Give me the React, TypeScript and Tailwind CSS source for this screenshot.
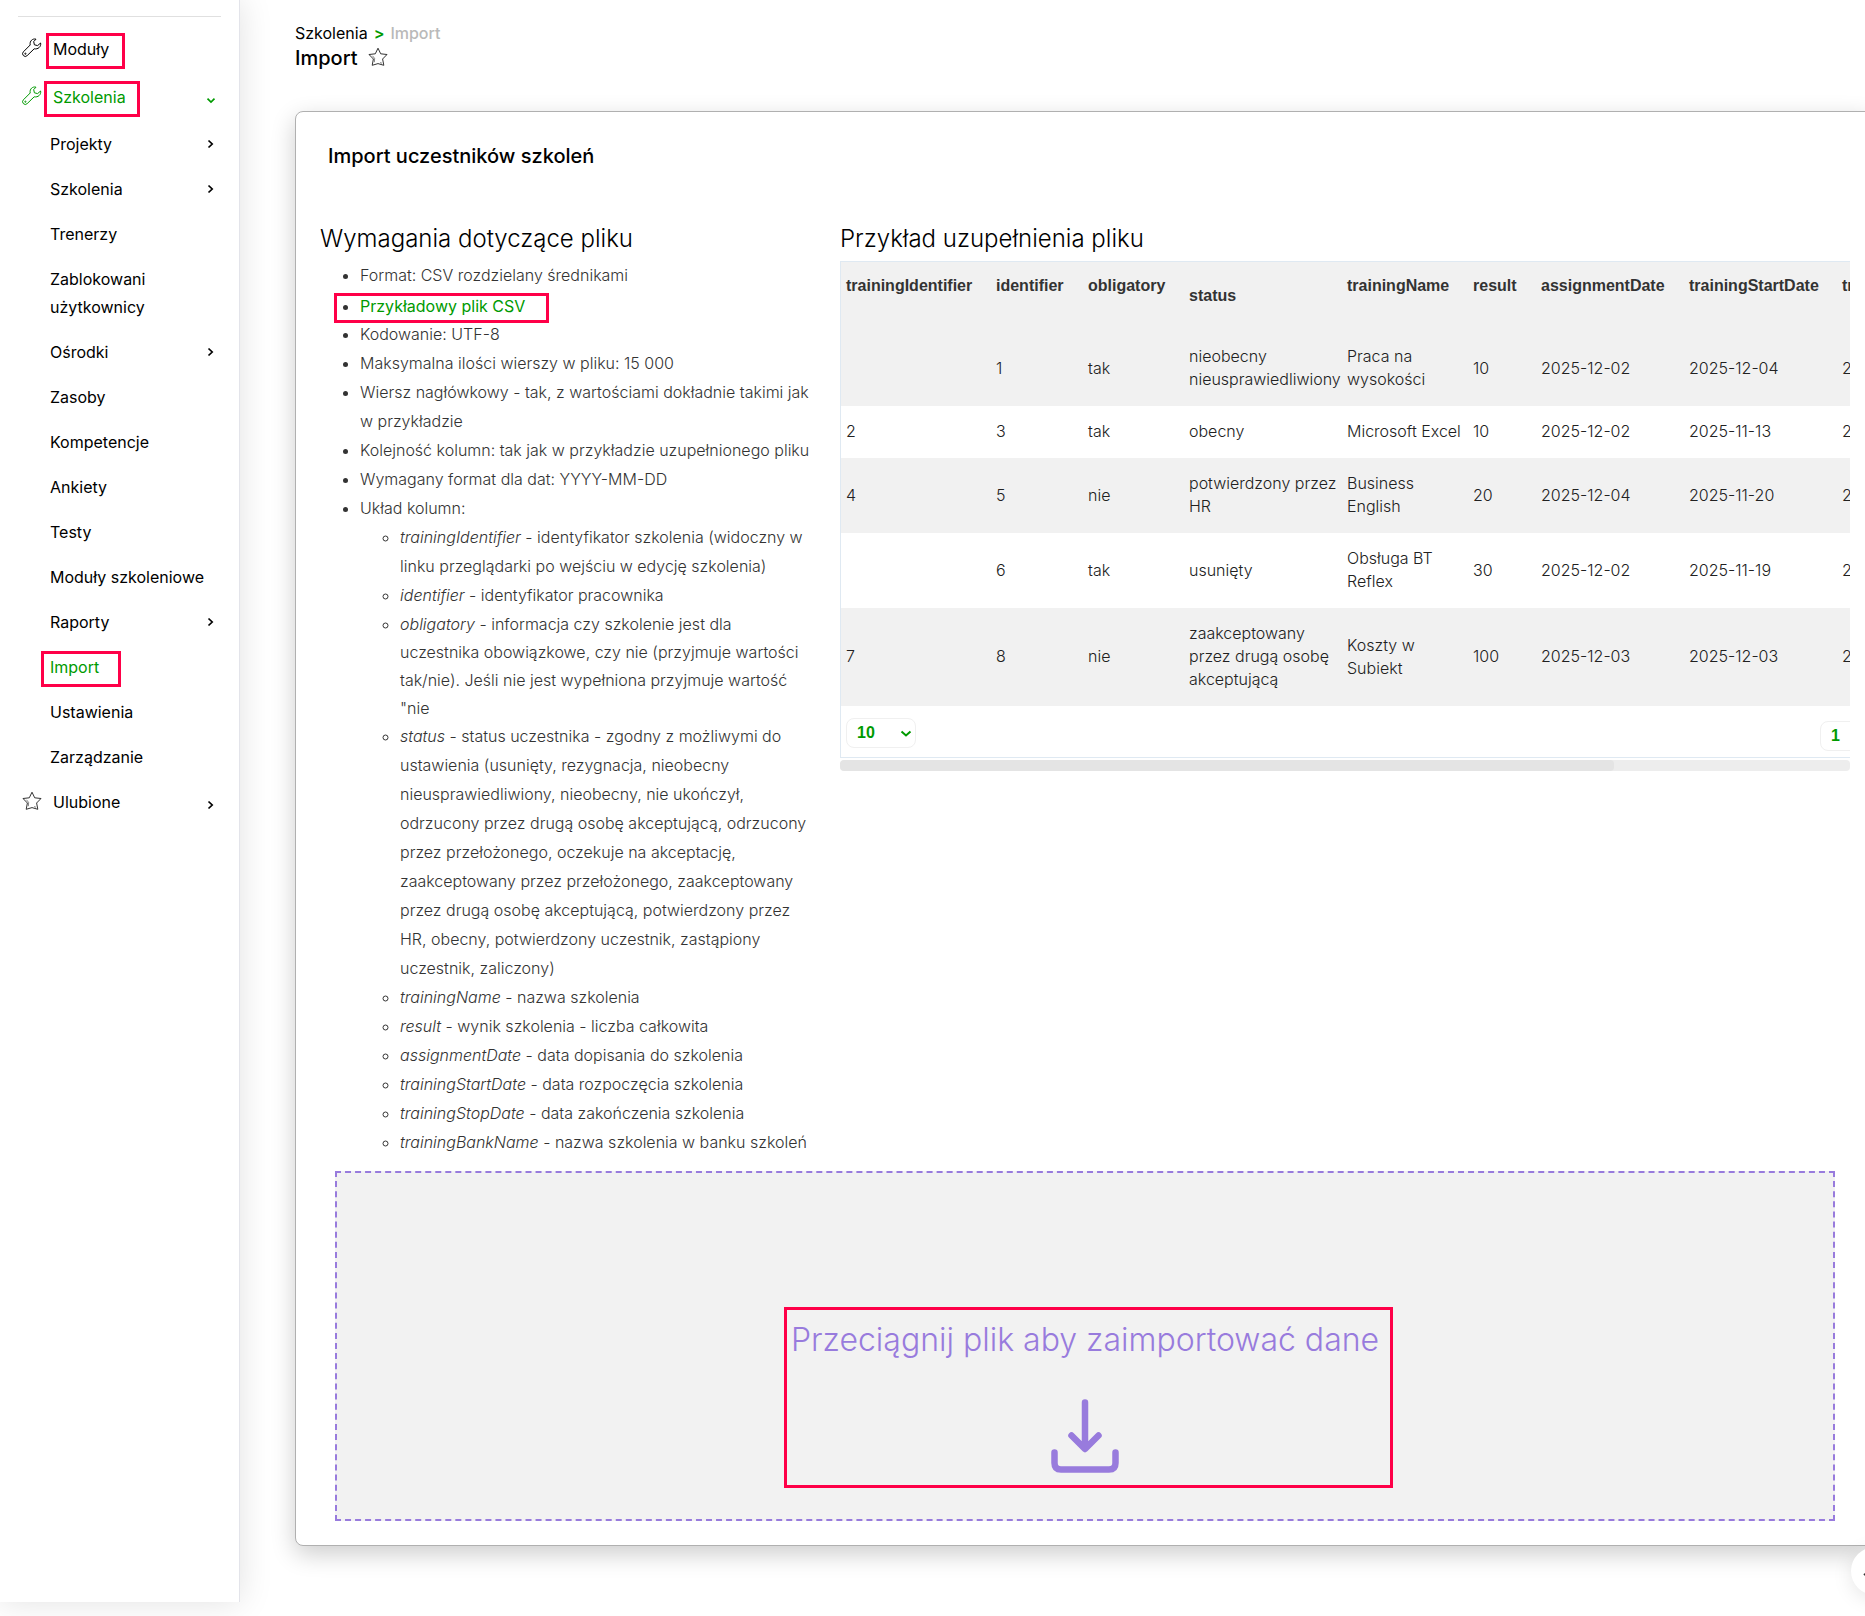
import type { ReactNode } from "react"
import clsx from "clsx"

type SubItem = { label: string, arrow?: boolean, active?: boolean }

const subItems: SubItem[] = [
    { label: "Projekty", arrow: true },
    { label: "Szkolenia", arrow: true },
    { label: "Trenerzy" },
    { label: "Zablokowani użytkownicy" },
    { label: "Ośrodki", arrow: true },
    { label: "Zasoby" },
    { label: "Kompetencje" },
    { label: "Ankiety" },
    { label: "Testy" },
    { label: "Moduły szkoleniowe" },
    { label: "Raporty", arrow: true },
    { label: "Import", active: true },
    { label: "Ustawienia" },
    { label: "Zarządzanie" },
]

const columnsInfo = [
    { name: "trainingIdentifier", text: "identyfikator szkolenia (widoczny w\nlinku przeglądarki po wejściu w edycję szkolenia)" },
    { name: "identifier", text: "identyfikator pracownika" },
    { name: "obligatory", text: "informacja czy szkolenie jest dla\nuczestnika obowiązkowe, czy nie (przyjmuje wartości\ntak/nie). Jeśli nie jest wypełniona przyjmuje wartość\n\"nie", dense: true },
    { name: "status", text: "status uczestnika - zgodny z możliwymi do\nustawienia (usunięty, rezygnacja, nieobecny\nnieusprawiedliwiony, nieobecny, nie ukończył,\nodrzucony przez drugą osobę akceptującą, odrzucony\nprzez przełożonego, oczekuje na akceptację,\nzaakceptowany przez przełożonego, zaakceptowany\nprzez drugą osobę akceptującą, potwierdzony przez\nHR, obecny, potwierdzony uczestnik, zastąpiony\nuczestnik, zaliczony)" },
    { name: "trainingName", text: "nazwa szkolenia" },
    { name: "result", text: "wynik szkolenia - liczba całkowita" },
    { name: "assignmentDate", text: "data dopisania do szkolenia" },
    { name: "trainingStartDate", text: "data rozpoczęcia szkolenia" },
    { name: "trainingStopDate", text: "data zakończenia szkolenia" },
    { name: "trainingBankName", text: "nazwa szkolenia w banku szkoleń" },
]

const headers = [
    { name: "trainingIdentifier", width: "w-[150px]" },
    { name: "identifier", width: "w-[92px]" },
    { name: "obligatory", width: "w-[101px]" },
    { name: "status", width: "w-[158px]" },
    { name: "trainingName", width: "w-[126px]" },
    { name: "result", width: "w-[68px]" },
    { name: "assignmentDate", width: "w-[148px]" },
    { name: "trainingStartDate", width: "w-[153px]" },
    { name: "trainingStopDate", width: "w-[154px]" },
]

const rows = [
    ["", "1", "tak", "nieobecny\nnieusprawiedliwiony", "Praca na\nwysokości", "10", "2025-12-02", "2025-12-04", "2025-12-04"],
    ["2", "3", "tak", "obecny", "Microsoft Excel", "10", "2025-12-02", "2025-11-13", "2025-11-13"],
    ["4", "5", "nie", "potwierdzony przez\nHR", "Business\nEnglish", "20", "2025-12-04", "2025-11-20", "2025-11-20"],
    ["", "6", "tak", "usunięty", "Obsługa BT\nReflex", "30", "2025-12-02", "2025-11-19", "2025-11-19"],
    ["7", "8", "nie", "zaakceptowany\nprzez drugą osobę\nakceptującą", "Koszty w\nSubiekt", "100", "2025-12-03", "2025-12-03", "2025-12-03"],
]

export default function App() {
    return (
        <div className="flex min-h-screen bg-white font-['Inter',sans-serif] text-base text-black">
            <Sidebar />
            <main className="relative flex-1 min-w-0 overflow-hidden pl-[55px] pt-[21px] pb-16">
                <nav aria-label="Okruszki" className="flex gap-1.5 leading-6">
                    <a href="#szkolenia">Szkolenia</a>
                    <span className="font-semibold text-[#009a00]">&gt;</span>
                    <span className="font-medium text-[#b9b9b9]">Import</span>
                </nav>
                <div className="flex gap-2.5 pt-px">
                    <h1 className="text-xl leading-6 font-medium">Import</h1>
                    <button type="button" aria-label="Dodaj do ulubionych">
                        <StarIcon />
                    </button>
                </div>

                <section className="-mr-2 mt-[41px] rounded-lg border border-[#b0b0b0] bg-white pt-[30px] pr-[22px] pb-6 pl-6 shadow-[0_8px_24px_rgba(0,0,0,0.2)]">
                    <h2 className="ml-2 text-xl leading-7 font-medium">Import uczestników szkoleń</h2>
                    <div className="mt-[53px] grid grid-cols-3">
                        <Requirements />
                        <Example />
                    </div>
                    <DropZone />
                </section>

                <button
                    type="button"
                    aria-label="Do góry"
                    className="absolute top-[1547px] -right-[34px] flex size-12 items-center justify-center rounded-full bg-white shadow-[0_4px_20px_rgba(0,0,0,0.1)]">
                    <svg viewBox="0 0 24 12" className="w-6 h-3" fill="none" stroke="#333" strokeWidth="2">
                        <path d="M1 10 12 1l11 9" />
                    </svg>
                </button>
            </main>
        </div>
    )
}

function Sidebar() {
    return (
        <aside className="relative z-10 mb-3.5 w-60 shrink-0 border-r border-[#e3e4ea] bg-white pt-4 shadow-[0_0_32px_rgba(0,0,0,0.12)]">
            <hr className="mr-[18px] ml-[18px] border-[#e0e0e0]" />
            <ul className="pt-2.5 pr-[25px] pl-[22px]">
                <li className="mb-[3px]">
                    <TopItem icon={<WrenchIcon />}>
                        <Marked box="-top-0.5 -left-[7px] h-9 w-[79px]">Moduły</Marked>
                    </TopItem>
                </li>
                <li>
                    <TopItem icon={<WrenchIcon />} arrow="down" active>
                        <Marked box="-top-0.5 -left-[9px] h-9 w-24">Szkolenia</Marked>
                    </TopItem>
                    <ul className="mt-0.5">
                        {subItems.map((item) => (
                            <li key={item.label}>
                                <a
                                    href="#"
                                    className={clsx("flex items-center justify-between pt-2 pb-[9px] pl-7 leading-7", item.active && "text-[#009a00]")}>
                                    {item.active
                                        ? <Marked box="-top-0.5 -left-[9px] h-9 w-20">{item.label}</Marked>
                                        : <span>{wrapLabel(item.label)}</span>}
                                    {item.arrow && <Chevron dir="right" />}
                                </a>
                            </li>
                        ))}
                    </ul>
                </li>
                <li>
                    <TopItem icon={<StarIcon />} arrow="right">Ulubione</TopItem>
                </li>
            </ul>
        </aside>
    )
}

// only the longest label needs two lines
function wrapLabel(label: string) {
    return label.startsWith("Zablokowani") ? <>Zablokowani<br />użytkownicy</> : label
}

function TopItem({ icon, arrow, active, children }: { icon: ReactNode, arrow?: "right" | "down", active?: boolean, children: ReactNode }) {
    return (
        <a href="#" className={clsx("flex items-center pt-2 pb-[9px] leading-7", active && "text-[#009a00]")}>
            <span className="mr-[11px]">{icon}</span>
            <span>{children}</span>
            {arrow && <span className={clsx("mt-1.5 ml-auto", arrow === "down" && "-mr-0.5")}><Chevron dir={arrow} /></span>}
        </a>
    )
}

function Marked({ box, children }: { box: string, children: ReactNode }) {
    return (
        <span className="relative inline-block">
            {children}
            <span className={clsx("pointer-events-none absolute border-3 border-[#ff0048]", box)} />
        </span>
    )
}

function Requirements() {
    return (
        <div>
            <h3 className="mb-1.5 text-2xl leading-8 font-light whitespace-nowrap">Wymagania dotyczące pliku</h3>
            <ul className="list-disc pl-10 leading-[29px] font-light whitespace-pre text-[#333]">
                <li>Format: CSV rozdzielany średnikami</li>
                <li className="pt-0.5 leading-7">
                    <Marked box="top-px -left-[26px] h-[30px] w-[215px]">
                        <a href="#csv" className="font-normal text-[#009a00]">Przykładowy plik CSV</a>
                    </Marked>
                </li>
                <li>Kodowanie: UTF-8</li>
                <li>Maksymalna ilości wierszy w pliku: 15 000</li>
                <li>{"Wiersz nagłówkowy - tak, z wartościami dokładnie takimi jak\nw przykładzie"}</li>
                <li>Kolejność kolumn: tak jak w przykładzie uzupełnionego pliku</li>
                <li>Wymagany format dla dat: YYYY-MM-DD</li>
                <li>
                    Układ kolumn:
                    <ul className="list-[circle] pl-10">
                        {columnsInfo.map((col) => (
                            <li key={col.name} className={clsx(col.dense && "leading-7")}>
                                <em>{col.name}</em> - {col.text}
                            </li>
                        ))}
                    </ul>
                </li>
            </ul>
        </div>
    )
}

function Example() {
    return (
        <div className="col-span-2 min-w-0 pl-2.5">
            <h3 className="mb-1.5 text-2xl leading-8 font-light">Przykład uzupełnienia pliku</h3>
            <div className="overflow-hidden border-y border-l border-[#dfe9f2]">
                <table className="w-[1150px] table-fixed text-left font-light leading-[23px] whitespace-pre">
                    <thead className="bg-[#f1f1f1] font-['Liberation_Sans',sans-serif] text-[#333]">
                        <tr className="h-[69px]">
                            {headers.map(({ name, width }) => (
                                <th
                                    key={name}
                                    className={clsx("px-[5px] font-bold", width, name === "status" ? "pb-0.5 align-middle" : "pt-3 align-top")}>
                                    {name}
                                </th>
                            ))}
                        </tr>
                    </thead>
                    <tbody className="text-[#212121]">
                        {rows.map((row) => (
                            <tr key={row[1]} className="odd:bg-[#f1f1f1]">
                                {row.map((cell, i) => (
                                    <td key={headers[i].name} className="px-[5px] pt-3.5 pb-[15px]">{cell}</td>
                                ))}
                            </tr>
                        ))}
                    </tbody>
                </table>
                <div className="flex justify-between pt-3 pb-1.5 pl-[5px]">
                    <PageSelect label="Liczba wierszy" options={["10", "20", "50"]} />
                    <div className="mt-[3px] -mr-10">
                        <PageSelect label="Strona" options={["1"]} />
                    </div>
                </div>
            </div>
            <div className="mt-0.5 h-[11px] overflow-hidden rounded bg-[#ededed]">
                <div className="h-full w-23/30 rounded bg-[#e4e4e4]" />
            </div>
        </div>
    )
}

function PageSelect({ label, options }: { label: string, options: string[] }) {
    return (
        <div className="relative h-[30px] w-[70px] font-['Liberation_Sans',sans-serif] text-[#009a00]">
            <select
                aria-label={label}
                className="size-full appearance-none rounded-lg border border-[#f0f0f0] bg-white pl-2.5 font-bold">
                {options.map((o) => <option key={o}>{o}</option>)}
            </select>
            <svg viewBox="0 0 12 8" className="pointer-events-none absolute top-3 right-1 h-2 w-3" fill="none" stroke="currentColor" strokeWidth="2">
                <path d="M1.5 1.5 6 5.5l4.5-4" />
            </svg>
        </div>
    )
}

function DropZone() {
    return (
        <label className="mx-[15px] mt-3.5 flex h-[350px] justify-center border-2 border-dashed border-[#987bdd] bg-[#f2f2f2] pt-[146px] text-[#987bdd]">
            <input type="file" accept=".csv" className="sr-only" />
            <div className="relative h-[154px]">
                <p className="pt-px text-[32px] leading-10 font-light">Przeciągnij plik aby zaimportować dane</p>
                <svg viewBox="0 0 68 74" className="mx-auto mt-[39px] w-[68px] h-[74px]" fill="none" stroke="currentColor" strokeWidth="6.5" strokeLinecap="round" strokeLinejoin="round">
                    <path d="M34 3.5V49M20.500 36.500 34 50l13.500-13.500M3.500 53.500V64q0 6.500 6.500 6.500h48q6.500 0 6.500-6.500V53.500" />
                </svg>
                <span className="pointer-events-none absolute -top-3 -right-3.5 -bottom-[15px] -left-[7px] border-3 border-[#ff0048]" />
            </div>
        </label>
    )
}

function Chevron({ dir }: { dir: "right" | "down" }) {
    return dir === "right" ? (
        <svg viewBox="0 0 7 10" className="h-2.5 w-[7px]" fill="none" stroke="currentColor" strokeWidth="1.7">
            <path d="M1.500 1.500 5.200 5 1.500 8.500" />
        </svg>
    ) : (
        <svg viewBox="0 0 10 7" className="h-[7px] w-2.5" fill="none" stroke="currentColor" strokeWidth="1.7">
            <path d="M1.500 1.700 5 5 8.500 1.700" />
        </svg>
    )
}

function WrenchIcon() {
    return (
        <svg viewBox="0 0 20 20" className="mb-0.5 size-5" fill="none" stroke="currentColor" strokeLinejoin="round">
            <path d="M14 1.200C10.800.2 7.400 2.800 8.200 7L1.400 13.800a2.600 2.600 0 0 0 3.800 3.800L12.200 10.800C16 11.600 19.400 8.600 18.600 5L15.600 7.600 12.400 6.800 11.700 3.600Z" />
            <circle cx="3.400" cy="15.700" r=".6" />
        </svg>
    )
}

function StarIcon() {
    return (
        <svg viewBox="0 0 20 20" className="mb-0.5 size-5" fill="none" stroke="#333">
            <path d="M10 1.200 12.700 6.800 19 7.500 14.600 12 15.800 18.300 10 16.600 4.200 18.300 5.400 12 1 7.500 7.300 6.800Z" />
            <path d="M4.500 8.800 6.600 11.400 6.400 15.200M12 15.600l2 .6" strokeWidth=".6" />
        </svg>
    )
}
